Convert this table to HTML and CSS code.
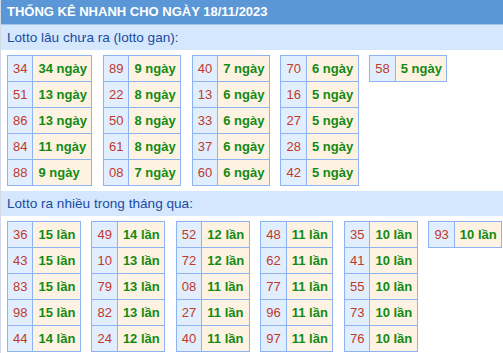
FILE: index.html
```html
<!DOCTYPE html>
<html lang="vi">
<head>
<meta charset="utf-8">
<link rel="stylesheet" href="styles.css">
</head>
<body>
<div class="wrap">
  <div class="title">THỐNG KÊ NHANH CHO NGÀY 18/11/2023</div>
  <div class="sub">Lotto lâu chưa ra (lotto gan):</div>
  <div class="tables">
    <table><tr><td class="n">34</td><td class="v">34 ngày</td></tr><tr><td class="n">51</td><td class="v">13 ngày</td></tr><tr><td class="n">86</td><td class="v">13 ngày</td></tr><tr><td class="n">84</td><td class="v">11 ngày</td></tr><tr><td class="n">88</td><td class="v">9 ngày</td></tr></table>
    <table><tr><td class="n">89</td><td class="v">9 ngày</td></tr><tr><td class="n">22</td><td class="v">8 ngày</td></tr><tr><td class="n">50</td><td class="v">8 ngày</td></tr><tr><td class="n">61</td><td class="v">8 ngày</td></tr><tr><td class="n">08</td><td class="v">7 ngày</td></tr></table>
    <table><tr><td class="n">40</td><td class="v">7 ngày</td></tr><tr><td class="n">13</td><td class="v">6 ngày</td></tr><tr><td class="n">33</td><td class="v">6 ngày</td></tr><tr><td class="n">37</td><td class="v">6 ngày</td></tr><tr><td class="n">60</td><td class="v">6 ngày</td></tr></table>
    <table><tr><td class="n">70</td><td class="v">6 ngày</td></tr><tr><td class="n">16</td><td class="v">5 ngày</td></tr><tr><td class="n">27</td><td class="v">5 ngày</td></tr><tr><td class="n">28</td><td class="v">5 ngày</td></tr><tr><td class="n">42</td><td class="v">5 ngày</td></tr></table>
    <table><tr><td class="n">58</td><td class="v">5 ngày</td></tr></table>
  </div>
  <div class="sub">Lotto ra nhiều trong tháng qua:</div>
  <div class="tables">
    <table><tr><td class="n">36</td><td class="v">15 lần</td></tr><tr><td class="n">43</td><td class="v">15 lần</td></tr><tr><td class="n">83</td><td class="v">15 lần</td></tr><tr><td class="n">98</td><td class="v">15 lần</td></tr><tr><td class="n">44</td><td class="v">14 lần</td></tr></table>
    <table><tr><td class="n">49</td><td class="v">14 lần</td></tr><tr><td class="n">10</td><td class="v">13 lần</td></tr><tr><td class="n">79</td><td class="v">13 lần</td></tr><tr><td class="n">82</td><td class="v">13 lần</td></tr><tr><td class="n">24</td><td class="v">12 lần</td></tr></table>
    <table><tr><td class="n">52</td><td class="v">12 lần</td></tr><tr><td class="n">72</td><td class="v">12 lần</td></tr><tr><td class="n">08</td><td class="v">11 lần</td></tr><tr><td class="n">27</td><td class="v">11 lần</td></tr><tr><td class="n">40</td><td class="v">11 lần</td></tr></table>
    <table><tr><td class="n">48</td><td class="v">11 lần</td></tr><tr><td class="n">62</td><td class="v">11 lần</td></tr><tr><td class="n">77</td><td class="v">11 lần</td></tr><tr><td class="n">96</td><td class="v">11 lần</td></tr><tr><td class="n">97</td><td class="v">11 lần</td></tr></table>
    <table><tr><td class="n">35</td><td class="v">10 lần</td></tr><tr><td class="n">41</td><td class="v">10 lần</td></tr><tr><td class="n">55</td><td class="v">10 lần</td></tr><tr><td class="n">73</td><td class="v">10 lần</td></tr><tr><td class="n">76</td><td class="v">10 lần</td></tr></table>
    <table><tr><td class="n">93</td><td class="v">10 lần</td></tr></table>
  </div>
</div>
</body>
</html>
```
FILE: styles.css
```css
html, body {
  margin: 0;
  padding: 0;
  background: #ffffff;
}
.wrap {
  border-left: 1px solid #d3dae5;
  min-height: 353px;
  box-sizing: border-box;
  font-family: "Liberation Sans", Arial, sans-serif;
}
.title {
  height: 24px;
  line-height: 24px;
  padding-left: 6px;
  background: #5b97d6;
  border-bottom: 1px solid #a7c5ea;
  color: #ffffff;
  font-size: 13px;
  font-weight: bold;
  white-space: nowrap;
}
.sub {
  height: 25px;
  line-height: 25px;
  padding-left: 6px;
  background: #d4e7fc;
  color: #1b4ba3;
  font-size: 13.6px;
}
.tables {
  display: flex;
  align-items: flex-start;
  gap: 10.5px;
  padding: 5px 6px;
}
table {
  border-collapse: collapse;
  font-size: 13px;
}
td {
  border: 1px solid #8db3f3;
  padding: 0 5px 0 5px;
  line-height: 25px;
  white-space: nowrap;
}
td.n {
  background: #e1eefd;
  color: #c0392b;
}
td.v {
  background: #fef3e3;
  color: #138a13;
  font-weight: bold;
  padding-right: 4.6px;
}
```
